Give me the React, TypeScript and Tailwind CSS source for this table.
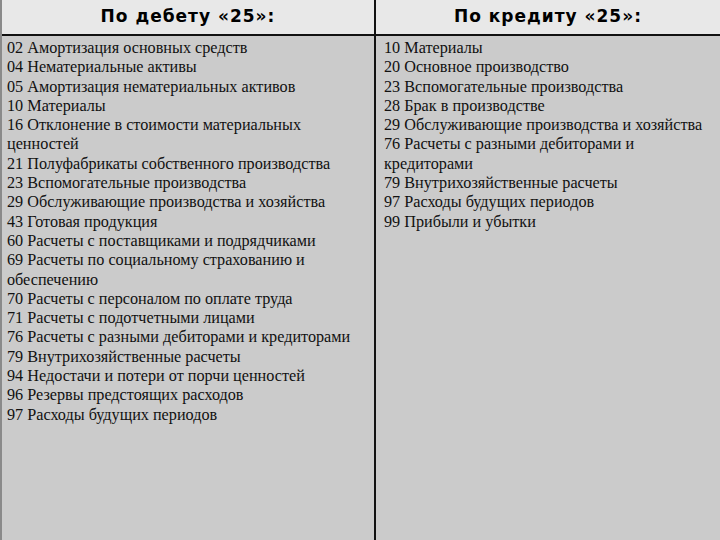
const debit = [
  "02 Амортизация основных средств",
  "04 Нематериальные активы",
  "05 Амортизация нематериальных активов",
  "10 Материалы",
  "16 Отклонение в стоимости материальных ценностей",
  "21 Полуфабрикаты собственного производства",
  "23 Вспомогательные производства",
  "29 Обслуживающие производства и хозяйства",
  "43 Готовая продукция",
  "60 Расчеты с поставщиками и подрядчиками",
  "69 Расчеты по социальному страхованию и обеспечению",
  "70 Расчеты с персоналом по оплате труда",
  "71 Расчеты с подотчетными лицами",
  "76 Расчеты с разными дебиторами и кредиторами",
  "79 Внутрихозяйственные расчеты",
  "94 Недостачи и потери от порчи ценностей",
  "96 Резервы предстоящих расходов",
  "97 Расходы будущих периодов",
];

const credit = [
  "10 Материалы",
  "20 Основное производство",
  "23 Вспомогательные производства",
  "28 Брак в производстве",
  "29 Обслуживающие производства и хозяйства",
  "76 Расчеты с разными дебиторами и кредиторами",
  "79 Внутрихозяйственные расчеты",
  "97 Расходы будущих периодов",
  "99 Прибыли и убытки",
];

function Column({ title, items, className }: { title: string; items: string[]; className: string }) {
  return (
    <div className={`flex flex-col ${className}`}>
      <div className="h-[36px] bg-[#e8e8e8] border-b-2 border-[#111] flex items-center justify-center">
        <h2 className="font-['DejaVu_Sans',sans-serif] font-bold text-[17px] text-black tracking-[1px]">
          {title}
        </h2>
      </div>
      <ul className="flex-1 bg-[#cbcbcb] pt-[3px] font-['Liberation_Serif',serif] text-[16.2px] leading-[19.3px] text-[#111]">
        {items.map((item, i) => (
          <li key={i}>{item}</li>
        ))}
      </ul>
    </div>
  );
}

export default function App() {
  return (
    <div className="w-[720px] h-[540px] flex bg-[#cbcbcb] border-l-2 border-[#8a8a8a] overflow-hidden">
      <Column
        title="По дебету «25»:"
        items={debit}
        className="w-[374px] pl-[5px] pr-[10px] border-r-2 border-[#111] [&>div]:-ml-[5px] [&>div]:-mr-[10px]"
      />
      <Column
        title="По кредиту «25»:"
        items={credit}
        className="flex-1 pl-[8px] pr-[12px] [&>div]:-ml-[8px] [&>div]:-mr-[12px]"
      />
    </div>
  );
}
